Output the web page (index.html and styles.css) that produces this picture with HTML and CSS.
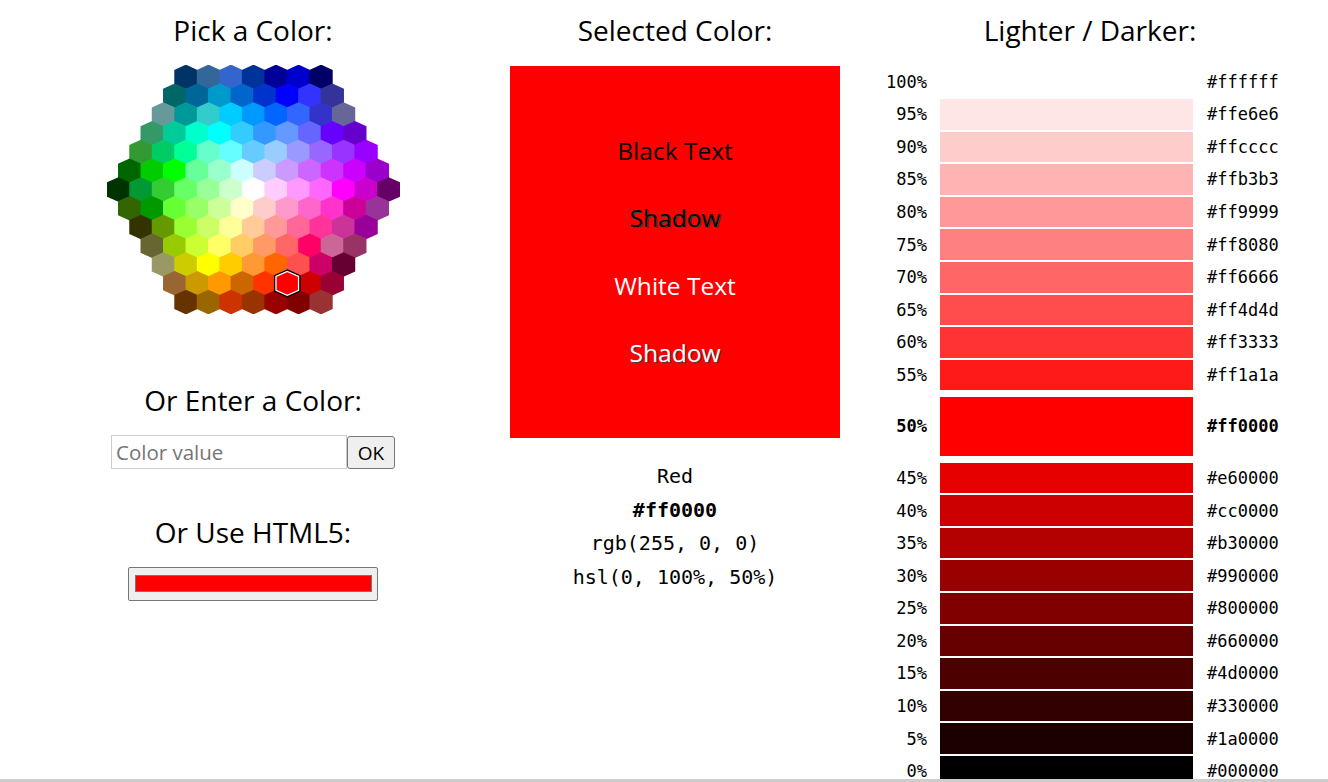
FILE: index.html
```html
<!DOCTYPE html>
<html lang="en">
<head>
<meta charset="utf-8">
<title>Color Picker</title>
<link rel="stylesheet" href="styles.css">
</head>
<body>
<div class="page">
  <section class="col col-pick">
    <h2 class="title">Pick a Color:</h2>
    <svg class="hexmap" viewBox="0 0 234 199" width="293" height="249" aria-label="Color map">
      <defs><polygon id="h" points="0,-0.3 9.3,3.9 9.3,15.1 0,19.3 -9.3,15.1 -9.3,3.9"/></defs>
      <g>
        <use href="#h" x="63" y="0" fill="#003366"/><use href="#h" x="81" y="0" fill="#336699"/><use href="#h" x="99" y="0" fill="#3366CC"/><use href="#h" x="117" y="0" fill="#003399"/><use href="#h" x="135" y="0" fill="#000099"/><use href="#h" x="153" y="0" fill="#0000CC"/><use href="#h" x="171" y="0" fill="#000066"/>
      </g>
      <g transform="translate(0,15)">
        <use href="#h" x="54" fill="#006666"/><use href="#h" x="72" fill="#006699"/><use href="#h" x="90" fill="#0099CC"/><use href="#h" x="108" fill="#0066CC"/><use href="#h" x="126" fill="#0033CC"/><use href="#h" x="144" fill="#0000FF"/><use href="#h" x="162" fill="#3333FF"/><use href="#h" x="180" fill="#333399"/>
      </g>
      <g transform="translate(0,30)">
        <use href="#h" x="45" fill="#669999"/><use href="#h" x="63" fill="#009999"/><use href="#h" x="81" fill="#33CCCC"/><use href="#h" x="99" fill="#00CCFF"/><use href="#h" x="117" fill="#0099FF"/><use href="#h" x="135" fill="#0066FF"/><use href="#h" x="153" fill="#3366FF"/><use href="#h" x="171" fill="#3333CC"/><use href="#h" x="189" fill="#666699"/>
      </g>
      <g transform="translate(0,45)">
        <use href="#h" x="36" fill="#339966"/><use href="#h" x="54" fill="#00CC99"/><use href="#h" x="72" fill="#00FFCC"/><use href="#h" x="90" fill="#00FFFF"/><use href="#h" x="108" fill="#33CCFF"/><use href="#h" x="126" fill="#3399FF"/><use href="#h" x="144" fill="#6699FF"/><use href="#h" x="162" fill="#6666FF"/><use href="#h" x="180" fill="#6600FF"/><use href="#h" x="198" fill="#6600CC"/>
      </g>
      <g transform="translate(0,60)">
        <use href="#h" x="27" fill="#339933"/><use href="#h" x="45" fill="#00CC66"/><use href="#h" x="63" fill="#00FF99"/><use href="#h" x="81" fill="#66FFCC"/><use href="#h" x="99" fill="#66FFFF"/><use href="#h" x="117" fill="#66CCFF"/><use href="#h" x="135" fill="#99CCFF"/><use href="#h" x="153" fill="#9999FF"/><use href="#h" x="171" fill="#9966FF"/><use href="#h" x="189" fill="#9933FF"/><use href="#h" x="207" fill="#9900FF"/>
      </g>
      <g transform="translate(0,75)">
        <use href="#h" x="18" fill="#006600"/><use href="#h" x="36" fill="#00CC00"/><use href="#h" x="54" fill="#00FF00"/><use href="#h" x="72" fill="#66FF99"/><use href="#h" x="90" fill="#99FFCC"/><use href="#h" x="108" fill="#CCFFFF"/><use href="#h" x="126" fill="#CCCCFF"/><use href="#h" x="144" fill="#CC99FF"/><use href="#h" x="162" fill="#CC66FF"/><use href="#h" x="180" fill="#CC33FF"/><use href="#h" x="198" fill="#CC00FF"/><use href="#h" x="216" fill="#9900CC"/>
      </g>
      <g transform="translate(0,90)">
        <use href="#h" x="9" fill="#003300"/><use href="#h" x="27" fill="#009933"/><use href="#h" x="45" fill="#33CC33"/><use href="#h" x="63" fill="#66FF66"/><use href="#h" x="81" fill="#99FF99"/><use href="#h" x="99" fill="#CCFFCC"/><use href="#h" x="117" fill="#FFFFFF"/><use href="#h" x="135" fill="#FFCCFF"/><use href="#h" x="153" fill="#FF99FF"/><use href="#h" x="171" fill="#FF66FF"/><use href="#h" x="189" fill="#FF00FF"/><use href="#h" x="207" fill="#CC00CC"/><use href="#h" x="225" fill="#660066"/>
      </g>
      <g transform="translate(0,105)">
        <use href="#h" x="18" fill="#336600"/><use href="#h" x="36" fill="#009900"/><use href="#h" x="54" fill="#66FF33"/><use href="#h" x="72" fill="#99FF66"/><use href="#h" x="90" fill="#CCFF99"/><use href="#h" x="108" fill="#FFFFCC"/><use href="#h" x="126" fill="#FFCCCC"/><use href="#h" x="144" fill="#FF99CC"/><use href="#h" x="162" fill="#FF66CC"/><use href="#h" x="180" fill="#FF33CC"/><use href="#h" x="198" fill="#CC0099"/><use href="#h" x="216" fill="#993399"/>
      </g>
      <g transform="translate(0,120)">
        <use href="#h" x="27" fill="#333300"/><use href="#h" x="45" fill="#669900"/><use href="#h" x="63" fill="#99FF33"/><use href="#h" x="81" fill="#CCFF66"/><use href="#h" x="99" fill="#FFFF99"/><use href="#h" x="117" fill="#FFCC99"/><use href="#h" x="135" fill="#FF9999"/><use href="#h" x="153" fill="#FF6699"/><use href="#h" x="171" fill="#FF3399"/><use href="#h" x="189" fill="#CC3399"/><use href="#h" x="207" fill="#990099"/>
      </g>
      <g transform="translate(0,135)">
        <use href="#h" x="36" fill="#666633"/><use href="#h" x="54" fill="#99CC00"/><use href="#h" x="72" fill="#CCFF33"/><use href="#h" x="90" fill="#FFFF66"/><use href="#h" x="108" fill="#FFCC66"/><use href="#h" x="126" fill="#FF9966"/><use href="#h" x="144" fill="#FF6666"/><use href="#h" x="162" fill="#FF0066"/><use href="#h" x="180" fill="#CC6699"/><use href="#h" x="198" fill="#993366"/>
      </g>
      <g transform="translate(0,150)">
        <use href="#h" x="45" fill="#999966"/><use href="#h" x="63" fill="#CCCC00"/><use href="#h" x="81" fill="#FFFF00"/><use href="#h" x="99" fill="#FFCC00"/><use href="#h" x="117" fill="#FF9933"/><use href="#h" x="135" fill="#FF6600"/><use href="#h" x="153" fill="#FF5050"/><use href="#h" x="171" fill="#CC0066"/><use href="#h" x="189" fill="#660033"/>
      </g>
      <g transform="translate(0,165)">
        <use href="#h" x="54" fill="#996633"/><use href="#h" x="72" fill="#CC9900"/><use href="#h" x="90" fill="#FF9900"/><use href="#h" x="108" fill="#CC6600"/><use href="#h" x="126" fill="#FF3300"/><use href="#h" x="144" fill="#FF0000"/><use href="#h" x="162" fill="#CC0000"/><use href="#h" x="180" fill="#990033"/>
      </g>
      <g transform="translate(0,180)">
        <use href="#h" x="63" fill="#663300"/><use href="#h" x="81" fill="#996600"/><use href="#h" x="99" fill="#CC3300"/><use href="#h" x="117" fill="#993300"/><use href="#h" x="135" fill="#990000"/><use href="#h" x="153" fill="#800000"/><use href="#h" x="171" fill="#993333"/>
      </g>
      <g class="selected-hex" transform="translate(144,174.5)">
        <polygon points="0,-10.64 10.08,-6.16 10.08,6.16 0,10.64 -10.08,6.16 -10.08,-6.16" fill="none" stroke="#000" stroke-width="1.2"/>
        <polygon points="0,-9.5 9,-5.5 9,5.5 0,9.5 -9,5.5 -9,-5.5" fill="#ff0000" stroke="#fff" stroke-width="1"/>
      </g>
    </svg>

    <h2 class="title title-sub">Or Enter a Color:</h2>
    <div class="color-entry">
      <input class="color-text" type="text" placeholder="Color value">
      <button class="ok-btn" type="button">OK</button>
    </div>

    <h2 class="title title-sub2">Or Use HTML5:</h2>
    <button class="color-btn" type="button"><span class="color-swatch"></span></button>
  </section>

  <section class="col col-sel">
    <h2 class="title">Selected Color:</h2>
    <div class="preview">
      <p class="pv pv-black">Black Text</p>
      <p class="pv pv-black pv-shadow">Shadow</p>
      <p class="pv pv-white">White Text</p>
      <p class="pv pv-white pv-shadow">Shadow</p>
    </div>
    <div class="info">
      <div>Red</div>
      <div class="info-hex">#ff0000</div>
      <div>rgb(255, 0, 0)</div>
      <div>hsl(0, 100%, 50%)</div>
    </div>
  </section>

  <section class="col col-shades">
    <h2 class="title">Lighter / Darker:</h2>
    <div class="shades">
      <div class="pct">100%</div><div class="bar" style="background:#ffffff"></div><div class="hex">#ffffff</div>
      <div class="pct">95%</div><div class="bar" style="background:#ffe6e6"></div><div class="hex">#ffe6e6</div>
      <div class="pct">90%</div><div class="bar" style="background:#ffcccc"></div><div class="hex">#ffcccc</div>
      <div class="pct">85%</div><div class="bar" style="background:#ffb3b3"></div><div class="hex">#ffb3b3</div>
      <div class="pct">80%</div><div class="bar" style="background:#ff9999"></div><div class="hex">#ff9999</div>
      <div class="pct">75%</div><div class="bar" style="background:#ff8080"></div><div class="hex">#ff8080</div>
      <div class="pct">70%</div><div class="bar" style="background:#ff6666"></div><div class="hex">#ff6666</div>
      <div class="pct">65%</div><div class="bar" style="background:#ff4d4d"></div><div class="hex">#ff4d4d</div>
      <div class="pct">60%</div><div class="bar" style="background:#ff3333"></div><div class="hex">#ff3333</div>
      <div class="pct">55%</div><div class="bar" style="background:#ff1a1a"></div><div class="hex">#ff1a1a</div>
      <div class="pct cur">50%</div><div class="bar cur" style="background:#ff0000"></div><div class="hex cur">#ff0000</div>
      <div class="pct">45%</div><div class="bar" style="background:#e60000"></div><div class="hex">#e60000</div>
      <div class="pct">40%</div><div class="bar" style="background:#cc0000"></div><div class="hex">#cc0000</div>
      <div class="pct">35%</div><div class="bar" style="background:#b30000"></div><div class="hex">#b30000</div>
      <div class="pct">30%</div><div class="bar" style="background:#990000"></div><div class="hex">#990000</div>
      <div class="pct">25%</div><div class="bar" style="background:#800000"></div><div class="hex">#800000</div>
      <div class="pct">20%</div><div class="bar" style="background:#660000"></div><div class="hex">#660000</div>
      <div class="pct">15%</div><div class="bar" style="background:#4d0000"></div><div class="hex">#4d0000</div>
      <div class="pct">10%</div><div class="bar" style="background:#330000"></div><div class="hex">#330000</div>
      <div class="pct">5%</div><div class="bar" style="background:#1a0000"></div><div class="hex">#1a0000</div>
      <div class="pct">0%</div><div class="bar" style="background:#000000"></div><div class="hex">#000000</div>
    </div>
  </section>
</div>
<div class="hscroll"></div>
</body>
</html>
```

FILE: styles.css
```css
html, body {
  margin: 0;
  padding: 0;
  overflow: hidden;
  background: #fff;
}

body {
  font-family: "Open Sans", "Noto Sans", sans-serif;
  color: #000;
}

.page {
  display: flex;
  align-items: flex-start;
}

.col-pick {
  width: 506px;
  display: flex;
  flex-direction: column;
  align-items: center;
}

.col-sel {
  width: 330px;
  margin-left: 4px;
}

.col-shades {
  flex: 1;
  margin-left: 12px;
}

.title {
  margin: 0;
  padding-top: 10px;
  font-size: 28px;
  line-height: 40px;
  font-weight: normal;
  text-align: center;
}

.hexmap {
  display: block;
  margin-top: 15px;
}

.title-sub {
  padding-top: 0;
  margin-top: 66px;
}

.title-sub2 {
  padding-top: 0;
  margin-top: 43px;
}

.color-entry {
  display: flex;
  align-items: flex-start;
  margin-top: 15px;
}

.color-text {
  width: 236px;
  height: 34px;
  box-sizing: border-box;
  margin: 0;
  border: 1px solid #cccccc;
  padding: 0 4px;
  font-family: "Open Sans", sans-serif;
  font-size: 20.5px;
  color: #000;
  outline: none;
}

.color-text::placeholder {
  color: #757575;
}

.ok-btn {
  width: 48px;
  height: 33px;
  margin: 1px 0 0;
  box-sizing: border-box;
  border: 1px solid #767676;
  border-radius: 3px;
  background: #efefef;
  padding: 0;
  font-family: "Open Sans", sans-serif;
  font-size: 19px;
  color: #000;
}

.color-btn {
  display: block;
  margin-top: 15px;
  width: 250px;
  height: 34px;
  box-sizing: border-box;
  border: 1px solid #767676;
  border-radius: 2px;
  background: #efefef;
  padding: 7px 5px 8px 6px;
}

.color-swatch {
  display: block;
  height: 100%;
  box-sizing: border-box;
  border: 1px solid #777777;
  background: #ff0000;
}

.preview {
  margin-top: 16px;
  height: 372px;
  background: #ff0000;
  display: flex;
  flex-direction: column;
  justify-content: center;
  gap: 33.2px;
}

.pv {
  margin: 0;
  font-size: 24.5px;
  line-height: 34px;
  text-align: center;
}

.pv-black { color: #000; }
.pv-white { color: #fff; }
.pv-shadow { text-shadow: 1px 1px 0 #444; }

.info {
  margin-top: 22px;
  font-family: "DejaVu Sans Mono", "Liberation Mono", monospace;
  font-size: 20px;
  line-height: 33.7px;
  text-align: center;
}

.info-hex {
  font-weight: bold;
}

.shades {
  margin-top: 16.4px;
  display: grid;
  grid-template-columns: 75px 253px auto;
  column-gap: 13px;
  row-gap: 2px;
  font-family: "DejaVu Sans Mono", "Liberation Mono", monospace;
  font-size: 17px;
}

.pct, .bar, .hex {
  height: 30.6px;
  display: flex;
  align-items: center;
}

.pct {
  justify-content: flex-end;
}

.hex {
  padding-left: 1px;
}

.cur {
  height: 59px;
  margin: 4.3px 0 5px;
  font-weight: bold;
}

.hscroll {
  position: fixed;
  left: 0;
  right: 0;
  bottom: 0;
  height: 3px;
  background: #cdcdcd;
}
```
